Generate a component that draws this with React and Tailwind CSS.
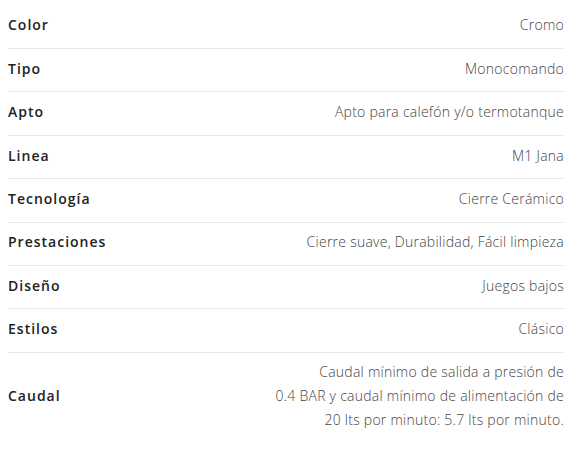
import React from 'react';

const specs = [
    { label: 'Color', value: 'Cromo' },
    { label: 'Tipo', value: 'Monocomando' },
    { label: 'Apto', value: 'Apto para calefón y/o termotanque' },
    { label: 'Linea', value: 'M1 Jana' },
    { label: 'Tecnología', value: 'Cierre Cerámico' },
    { label: 'Prestaciones', value: 'Cierre suave, Durabilidad, Fácil limpieza' },
    { label: 'Diseño', value: 'Juegos bajos' },
    { label: 'Estilos', value: 'Clásico' },
];

const App = () => {
    return (
        <div className="min-h-screen bg-white px-2 pt-[5.6px]">
            {/* Spec table */}
            <div className="w-[556px]">
                {specs.map((row) => (
                    <div
                        key={row.label}
                        className="flex justify-between items-center pt-[7.8px] pb-[10.6px] border-b border-[#e8e8e8]"
                    >
                        <span className="font-['Open_Sans',sans-serif] text-[14px] font-semibold tracking-[1px] leading-6 text-[#222]">
                            {row.label}
                        </span>
                        <span className="font-['Open_Sans',sans-serif] text-[14px] font-light tracking-[0.25px] leading-6 text-[#444]">
                            {row.value}
                        </span>
                    </div>
                ))}

                <div className="flex justify-between items-center pt-[7.6px] pb-[9px]">
                    <span className="font-['Open_Sans',sans-serif] text-[14px] font-semibold tracking-[1px] leading-6 text-[#222]">
                        Caudal
                    </span>
                    <span className="font-['Open_Sans',sans-serif] text-[14px] font-light tracking-[0.25px] leading-6 text-[#444] text-right">
                        Caudal mínimo de salida a presión de
                        <br />
                        0.4 BAR y caudal mínimo de alimentación de
                        <br />
                        20 lts por minuto: 5.7 lts por minuto.
                    </span>
                </div>
            </div>
        </div>
    );
};

export default App;
